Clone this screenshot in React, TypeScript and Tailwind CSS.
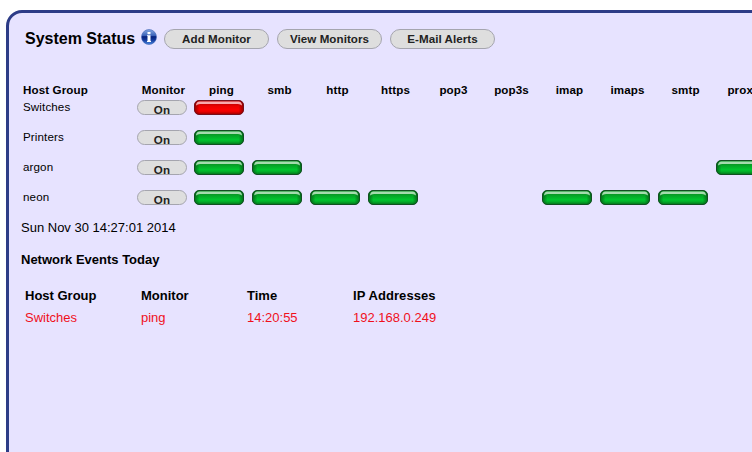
const services = ['ping', 'smb', 'http', 'https', 'pop3', 'pop3s', 'imap', 'imaps', 'smtp', 'proxy'];

type Host = { name: string; up: string[]; down: string[] };

const hosts: Host[] = [
  { name: 'Switches', up: [], down: ['ping'] },
  { name: 'Printers', up: ['ping'], down: [] },
  { name: 'argon', up: ['ping', 'smb', 'proxy'], down: [] },
  { name: 'neon', up: ['ping', 'smb', 'http', 'https', 'imap', 'imaps', 'smtp'], down: [] },
];

const events = [{ group: 'Switches', monitor: 'ping', time: '14:20:55', ip: '192.168.0.249' }];

function Lamp({ down }: { down?: boolean }) {
  const id = down ? 'lamp-down' : 'lamp-up';
  return (
    <svg width="50" height="15" viewBox="0 0 50 15" className="block">
      <defs>
        <linearGradient id={id} x1="0" y1="0" x2="0" y2="1">
          <stop offset="0.15" stopColor={down ? '#b80000' : '#0a8c22'} />
          <stop offset="0.42" stopColor={down ? '#ec0000' : '#03ab28'} />
          <stop offset="0.66" stopColor={down ? '#fb0000' : '#00c52e'} />
          <stop offset="0.8" stopColor={down ? '#e80000' : '#02ae29'} />
          <stop offset="1" stopColor={down ? '#980000' : '#06701b'} />
        </linearGradient>
        <linearGradient id={id + '-side'}>
          <stop offset="0" stopColor={down ? '#800000' : '#045a15'} stopOpacity="0.8" />
          <stop offset="0.1" stopColor={down ? '#800000' : '#045a15'} stopOpacity="0" />
          <stop offset="0.9" stopColor={down ? '#800000' : '#045a15'} stopOpacity="0" />
          <stop offset="1" stopColor={down ? '#800000' : '#045a15'} stopOpacity="0.8" />
        </linearGradient>
      </defs>
      <rect x="0.5" y="0.5" width="49" height="14" rx="4.5" fill={`url(#${id})`} />
      <rect
        x="0.5"
        y="0.5"
        width="49"
        height="14"
        rx="4.5"
        fill={`url(#${id}-side)`}
        stroke={down ? '#76101c' : '#124f22'}
      />
      <path d="M2 5.6Q2.3 1.4 5.5 1.4h39Q47.7 1.4 48 5.6Q46.3 3.9 44 3.9H6Q3.7 3.9 2 5.6z" fill={down ? '#f8a8ac' : '#a4dbae'} />
    </svg>
  );
}

function InfoIcon() {
  return (
    <svg width="16" height="16" viewBox="0 0 16 16" className="block">
      <defs>
        <linearGradient id="info-ball" x1="0" y1="0" x2="0" y2="1">
          <stop offset="0" stopColor="#86a8e2" />
          <stop offset="0.4" stopColor="#3c63b8" />
          <stop offset="0.48" stopColor="#06207c" />
          <stop offset="0.7" stopColor="#143a9c" />
          <stop offset="1" stopColor="#4b8ae2" />
        </linearGradient>
      </defs>
      <circle cx="8" cy="8" r="7.5" fill="url(#info-ball)" stroke="#3c62b4" strokeWidth="0.6" />
      <path d="M6.5 3h3v2.2h-3zM6 6.2h3.5V12H10v.9H6V12h.5V7.1H6z" fill="#fff" />
    </svg>
  );
}

function HeaderButton({ label }: { label: string }) {
  return (
    <button className="h-5 w-[105px] rounded-full border border-[#a5a5ae] bg-[#dedede] pb-px text-[11.6px] leading-[17px] font-bold tracking-[0.05px] text-[#222] whitespace-nowrap">
      {label}
    </button>
  );
}

export default function App() {
  return (
    <div className="h-[452px] overflow-hidden bg-white pt-[10px] pl-[6px] font-['Liberation_Sans',Arial,sans-serif] text-black">
      <main className="h-[500px] w-[860px] rounded-[16px] border-[3px] border-[#2d3c87] bg-[#e7e3ff] pt-4 pl-3">
        <header className="flex h-5 items-center pl-1">
          <h1 className="w-[116px] text-[16px] leading-5 font-bold whitespace-nowrap">System Status</h1>
          <div className="-mt-1 w-[23px]">
            <InfoIcon />
          </div>
          <div className="flex gap-2">
            <HeaderButton label="Add Monitor" />
            <HeaderButton label="View Monitors" />
            <HeaderButton label="E-Mail Alerts" />
          </div>
        </header>

        <section className="mt-[34px] pl-0.5 text-[11.6px] tracking-[0.12px]">
          <div className="flex h-[17px] leading-[14px] font-bold">
            <span className="w-[114px]">Host Group</span>
            <span className="w-[53px] text-center">Monitor</span>
            {services.map((s) => (
              <span key={s} className="w-[58px] pl-[5px] text-center">
                {s}
              </span>
            ))}
          </div>
          {hosts.map((h) => (
            <div key={h.name} className="flex h-[30px]">
              <span className="w-[114px] leading-[14px]">{h.name}</span>
              <button className="mr-[7px] h-[15px] w-[50px] rounded-full border border-[#a5a5ae] bg-[#dedede] font-bold text-[#222]">
                <span className="block h-[13px] pt-[2px] leading-[13px]">On</span>
              </button>
              {services.map((s) => (
                <div key={s} className="w-[58px] shrink-0">
                  {h.up.includes(s) && <Lamp />}
                  {h.down.includes(s) && <Lamp down />}
                </div>
              ))}
            </div>
          ))}
        </section>

        <section className="text-[13px] leading-4">
          <p>Sun Nov 30 14:27:01 2014</p>
          <h2 className="mt-4 font-bold">Network Events Today</h2>
          <div className="mt-5 grid grid-cols-[116px_106px_106px_120px] gap-y-1.5 pl-1">
            <b>Host Group</b>
            <b>Monitor</b>
            <b>Time</b>
            <b className="tracking-[0.08px]">IP Addresses</b>
            {events.map((e) => (
              <div key={e.time} className="contents text-[#f0101c]">
                <span>{e.group}</span>
                <span>{e.monitor}</span>
                <span>{e.time}</span>
                <span>{e.ip}</span>
              </div>
            ))}
          </div>
        </section>
      </main>
    </div>
  );
}
